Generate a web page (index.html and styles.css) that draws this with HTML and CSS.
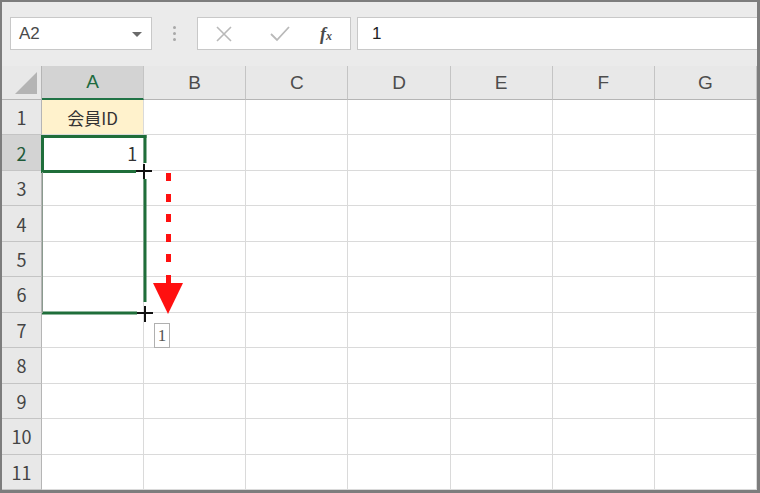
FILE: index.html
```html
<!DOCTYPE html>
<html lang="ja">
<head>
<meta charset="utf-8">
<link rel="stylesheet" href="styles.css">
</head>
<body>
<div class="frame">
  <div class="toolbar">
    <div class="namebox"><span class="ref">A2</span><span class="caret"></span></div>
    <div class="grip"><i></i><i></i><i></i></div>
    <div class="fbtns">
      <svg class="ico" width="20" height="20" viewBox="0 0 20 20"><path d="M3 3 L17 17 M17 3 L3 17" stroke="#b9b9b9" stroke-width="1.6" fill="none"/></svg>
      <svg class="ico" width="22" height="20" viewBox="0 0 22 20"><path d="M2 10 L8 16 L20 3" stroke="#b9b9b9" stroke-width="1.8" fill="none"/></svg>
      <span class="fx"><span class="f">f</span><span class="x">x</span></span>
    </div>
    <div class="finput">1</div>
  </div>
  <div class="sheet">
    <div class="corner"><svg width="40" height="34" viewBox="0 0 40 34"><polygon points="13,28 35,28 35,6" fill="#b4b4b4"/></svg></div>
    <div class="ch sel">A</div>
    <div class="ch">B</div>
    <div class="ch">C</div>
    <div class="ch">D</div>
    <div class="ch">E</div>
    <div class="ch">F</div>
    <div class="ch">G</div>

    <div class="rh">1</div><div class="c yellow">会員ID</div><div class="c"></div><div class="c"></div><div class="c"></div><div class="c"></div><div class="c"></div><div class="c"></div>
    <div class="rh sel">2</div><div class="c num">1</div><div class="c"></div><div class="c"></div><div class="c"></div><div class="c"></div><div class="c"></div><div class="c"></div>
    <div class="rh">3</div><div class="c"></div><div class="c"></div><div class="c"></div><div class="c"></div><div class="c"></div><div class="c"></div><div class="c"></div>
    <div class="rh">4</div><div class="c"></div><div class="c"></div><div class="c"></div><div class="c"></div><div class="c"></div><div class="c"></div><div class="c"></div>
    <div class="rh">5</div><div class="c"></div><div class="c"></div><div class="c"></div><div class="c"></div><div class="c"></div><div class="c"></div><div class="c"></div>
    <div class="rh">6</div><div class="c"></div><div class="c"></div><div class="c"></div><div class="c"></div><div class="c"></div><div class="c"></div><div class="c"></div>
    <div class="rh">7</div><div class="c"></div><div class="c"></div><div class="c"></div><div class="c"></div><div class="c"></div><div class="c"></div><div class="c"></div>
    <div class="rh">8</div><div class="c"></div><div class="c"></div><div class="c"></div><div class="c"></div><div class="c"></div><div class="c"></div><div class="c"></div>
    <div class="rh">9</div><div class="c"></div><div class="c"></div><div class="c"></div><div class="c"></div><div class="c"></div><div class="c"></div><div class="c"></div>
    <div class="rh">10</div><div class="c"></div><div class="c"></div><div class="c"></div><div class="c"></div><div class="c"></div><div class="c"></div><div class="c"></div>
    <div class="rh">11</div><div class="c"></div><div class="c"></div><div class="c"></div><div class="c"></div><div class="c"></div><div class="c"></div><div class="c"></div>

    <svg class="overlay" width="755" height="424" viewBox="2 66 755 424">
      <g stroke="#1f6e3a" stroke-width="3" fill="none">
        <path d="M41 136.5 H146.5"/>
        <path d="M42.5 135 V172"/>
        <path d="M41 171.5 H136"/>
        <path d="M145 135 V163"/>
        <path d="M145 179 V302"/>
        <path d="M42 313 H137"/>
      </g>
      <path d="M42.5 172 V313" stroke="#8a9a8e" stroke-width="1" fill="none"/>
      <g stroke="#111" stroke-width="2" fill="none">
        <path d="M136 171 H152 M144 164 V179"/>
        <path d="M137 313 H153 M145 306 V322"/>
      </g>
      <g fill="#ff1010">
        <rect x="166" y="173" width="5" height="8"/>
        <rect x="166" y="194" width="5" height="8"/>
        <rect x="166" y="214" width="5" height="8"/>
        <rect x="166" y="234" width="5" height="8"/>
        <rect x="166" y="254" width="5" height="8"/>
        <rect x="166" y="275" width="5" height="9"/>
        <polygon points="153,283 183,283 168,314"/>
      </g>
    </svg>
    <div class="tip">1</div>
  </div>
</div>
</body>
</html>
```

FILE: styles.css
```css
* { box-sizing: border-box; }
html, body { margin: 0; padding: 0; background: #fff; }
body { font-family: "Liberation Sans", "Noto Sans CJK JP", sans-serif; }

.frame {
  width: 760px;
  height: 493px;
  border-style: solid;
  border-color: #7d7d7d;
  border-width: 2px 3px 3px 2px;
  display: flex;
  flex-direction: column;
  overflow: hidden;
  background: #fff;
}

.toolbar {
  height: 64px;
  flex: none;
  background: #ebebeb;
  display: flex;
  align-items: flex-start;
  padding: 15px 0 0 8px;
}

.namebox {
  width: 142px;
  height: 33px;
  background: #fff;
  border: 1px solid #c8c8c8;
  display: flex;
  align-items: center;
  justify-content: space-between;
  padding: 0 9px 0 8px;
  color: #4a4a4a;
  font-size: 17px;
}
.caret {
  width: 0; height: 0;
  border-left: 5px solid transparent;
  border-right: 5px solid transparent;
  border-top: 5px solid #6a6a6a;
  margin-top: 1px;
}

.grip {
  width: 45px;
  height: 33px;
  display: flex;
  flex-direction: column;
  align-items: center;
  justify-content: center;
  gap: 3px;
}
.grip i {
  display: block;
  width: 3px; height: 3px;
  border-radius: 50%;
  background: #a8a8a8;
}

.fbtns {
  width: 154px;
  height: 33px;
  background: #fff;
  border: 1px solid #c8c8c8;
  display: flex;
  align-items: center;
  padding: 0 0 0 16px;
}
.fbtns .ico { display: block; }
.fbtns .ico:first-child { margin-right: 35px; }
.fbtns .ico:nth-child(2) { margin-right: 29px; }
.fx {
  font-family: "Liberation Serif", serif;
  font-style: italic;
  font-weight: bold;
  color: #4a4a4a;
  font-size: 18px;
  line-height: 1;
}
.fx .x { font-size: 12px; }

.finput {
  flex: 1;
  height: 33px;
  margin-left: 6px;
  background: #fff;
  border: 1px solid #c8c8c8;
  border-right: none;
  display: flex;
  align-items: center;
  padding-left: 14px;
  font-size: 17px;
  color: #222;
}

.sheet {
  position: relative;
  flex: 1;
  display: grid;
  grid-template-columns: 40px repeat(7, 1fr);
  grid-template-rows: 34px repeat(11, 1fr);
  background: #fff;
}

.corner {
  background: #e8e8e8;
  border-right: 1px solid #b5b5b5;
  border-bottom: 1px solid #b5b5b5;
}
.corner svg { display: block; }

.ch {
  background: #e8e8e8;
  border-right: 1px solid #c4c4c4;
  border-bottom: 1px solid #b5b5b5;
  display: flex;
  align-items: center;
  justify-content: center;
  font-size: 19px;
  color: #4d4d4d;
}
.ch.sel {
  background: #d3d3d3;
  color: #1e6b40;
  border-bottom: 2px solid #217346;
}

.rh {
  background: #e8e8e8;
  border-right: 1px solid #b5b5b5;
  border-bottom: 1px solid #c4c4c4;
  display: flex;
  align-items: center;
  justify-content: center;
  font-family: "Noto Sans CJK JP", sans-serif;
  font-size: 18px;
  color: #444;
}
.rh.sel {
  background: #d3d3d3;
  color: #1e5a3a;
}

.c {
  border-right: 1px solid #dadada;
  border-bottom: 1px solid #dadada;
  display: flex;
  align-items: center;
  font-family: "Noto Sans CJK JP", sans-serif;
  font-size: 17px;
  color: #333;
}
.c.yellow {
  background: #fff2cc;
  justify-content: center;
}
.c.num {
  justify-content: flex-end;
  padding-right: 6px;
  font-size: 18px;
}

.overlay {
  position: absolute;
  left: 0;
  top: 0;
  pointer-events: none;
}

.tip {
  position: absolute;
  left: 152px;
  top: 257px;
  width: 16px;
  height: 25px;
  background: #fff;
  border: 1px solid #b0b0b0;
  font-family: "Liberation Serif", serif;
  font-size: 17px;
  color: #555;
  display: flex;
  align-items: center;
  justify-content: center;
}
```
